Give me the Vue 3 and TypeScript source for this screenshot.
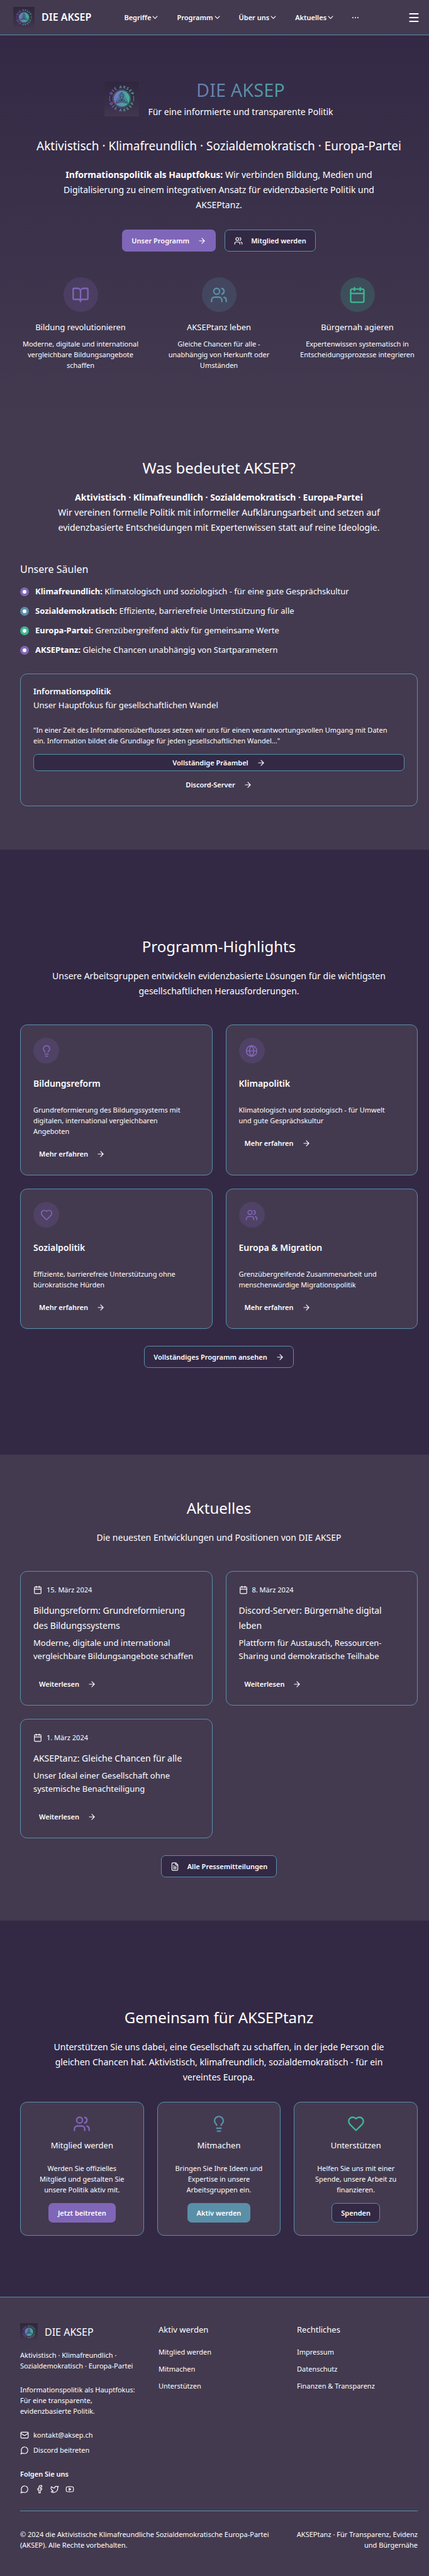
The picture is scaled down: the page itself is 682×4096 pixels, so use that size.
<script setup lang="ts">
import { h } from 'vue'

interface Feature {
  icon: string
  tone: string
  title: string
  text: string
}

interface Pillar {
  tone: string
  name: string
  text: string
}

interface Topic {
  icon: string
  title: string
  text: string
}

interface NewsItem {
  date: string
  title: string
  text: string
}

interface Action {
  icon: string
  tone: string
  title: string
  text: string
  label: string
  variant: string
}

const nav: string[] = ['Begriffe', 'Programm', 'Über uns', 'Aktuelles']

const features: Feature[] = [
  { icon: 'book', tone: 'purple', title: 'Bildung revolutionieren', text: 'Moderne, digitale und international vergleichbare Bildungsangebote schaffen' },
  { icon: 'users', tone: 'teal', title: 'AKSEPtanz leben', text: 'Gleiche Chancen für alle - unabhängig von Herkunft oder Umständen' },
  { icon: 'calendar', tone: 'green', title: 'Bürgernah agieren', text: 'Expertenwissen systematisch in Entscheidungsprozesse integrieren' },
]

const pillars: Pillar[] = [
  { tone: 'purple', name: 'Klimafreundlich:', text: 'Klimatologisch und soziologisch - für eine gute Gesprächskultur' },
  { tone: 'teal', name: 'Sozialdemokratisch:', text: 'Effiziente, barrierefreie Unterstützung für alle' },
  { tone: 'green', name: 'Europa-Partei:', text: 'Grenzübergreifend aktiv für gemeinsame Werte' },
  { tone: 'purple', name: 'AKSEPtanz:', text: 'Gleiche Chancen unabhängig von Startparametern' },
]

const topics: Topic[] = [
  { icon: 'bulb', title: 'Bildungsreform', text: 'Grundreformierung des Bildungssystems mit digitalen, international vergleichbaren Angeboten' },
  { icon: 'globe', title: 'Klimapolitik', text: 'Klimatologisch und soziologisch - für Umwelt und gute Gesprächskultur' },
  { icon: 'heart', title: 'Sozialpolitik', text: 'Effiziente, barrierefreie Unterstützung ohne bürokratische Hürden' },
  { icon: 'users', title: 'Europa & Migration', text: 'Grenzübergreifende Zusammenarbeit und menschenwürdige Migrationspolitik' },
]

const news: NewsItem[] = [
  { date: '15. März 2024', title: 'Bildungsreform: Grundreformierung des Bildungssystems', text: 'Moderne, digitale und international vergleichbare Bildungsangebote schaffen' },
  { date: '8. März 2024', title: 'Discord-Server: Bürgernähe digital leben', text: 'Plattform für Austausch, Ressourcen-Sharing und demokratische Teilhabe' },
  { date: '1. März 2024', title: 'AKSEPtanz: Gleiche Chancen für alle', text: 'Unser Ideal einer Gesellschaft ohne systemische Benachteiligung' },
]

const actions: Action[] = [
  { icon: 'users', tone: 'purple', title: 'Mitglied werden', text: 'Werden Sie offizielles Mitglied und gestalten Sie unsere Politik aktiv mit.', label: 'Jetzt beitreten', variant: 'btn-purple' },
  { icon: 'bulb', tone: 'teal', title: 'Mitmachen', text: 'Bringen Sie Ihre Ideen und Expertise in unsere Arbeitsgruppen ein.', label: 'Aktiv werden', variant: 'btn-teal' },
  { icon: 'heart', tone: 'green', title: 'Unterstützen', text: 'Helfen Sie uns mit einer Spende, unsere Arbeit zu finanzieren.', label: 'Spenden', variant: 'btn-outline' },
]

const footerColumns: { title: string; links: string[] }[] = [
  { title: 'Aktiv werden', links: ['Mitglied werden', 'Mitmachen', 'Unterstützen'] },
  { title: 'Rechtliches', links: ['Impressum', 'Datenschutz', 'Finanzen & Transparenz'] },
]

const socials: { icon: string; name: string }[] = [
  { icon: 'chat', name: 'Discord' },
  { icon: 'facebook', name: 'Facebook' },
  { icon: 'twitter', name: 'Twitter' },
  { icon: 'youtube', name: 'YouTube' },
]

// Letters run round the emblem: angle from the vertical and half the glyph width.
const angles = [-64, -48, -32, -19, -6, 13, 30, 47, 64]
const halfWidths = [3.3, 1.6, 2.4, 1, 3.1, 3, 2.5, 2.4, 2.8]

function ring(bottom: boolean) {
  const x: string[] = []
  const y: string[] = []
  const rotate: number[] = []
  angles.forEach((deg, i) => {
    const a = (deg * Math.PI) / 180
    const turn = bottom ? -a : a
    const r = bottom ? 30 : 24
    const cx = 40 + r * Math.sin(a)
    const cy = 39 + (bottom ? 1 : -1) * r * Math.cos(a)
    x.push((cx - halfWidths[i] * Math.cos(turn)).toFixed(2))
    y.push((cy - halfWidths[i] * Math.sin(turn)).toFixed(2))
    rotate.push(bottom ? -deg : deg)
  })
  return h('text', {
    x: x.join(' '),
    y: y.join(' '),
    rotate: rotate.join(' '),
    fill: 'url(#logo-tone)',
    'font-size': 9,
    'font-weight': 700,
  }, 'DIE AKSEP')
}

const Logo = () => h('svg', { class: 'logo', viewBox: '0 0 80 80', 'aria-hidden': 'true' }, [
  h('use', { href: '#emblem' }),
  ring(false),
  ring(true),
])
</script>

<template>
  <div class="page">
    <svg class="sprite" width="0" height="0" aria-hidden="true">
      <defs>
        <linearGradient id="logo-tone" gradientUnits="userSpaceOnUse" x1="12" y1="40" x2="68" y2="40">
          <stop offset="0" stop-color="#8066b8" />
          <stop offset="0.5" stop-color="#5a8fa8" />
          <stop offset="1" stop-color="#3eb793" />
        </linearGradient>
        <linearGradient id="logo-disc" gradientUnits="userSpaceOnUse" x1="21" y1="36" x2="59" y2="42">
          <stop offset="0" stop-color="#7474c0" />
          <stop offset="0.5" stop-color="#5595ad" />
          <stop offset="1" stop-color="#3eb793" />
        </linearGradient>
        <linearGradient id="logo-ground" x1="0" y1="0" x2="0" y2="1">
          <stop offset="0" stop-color="#30273f" />
          <stop offset="0.7" stop-color="#3a3049" />
          <stop offset="1" stop-color="#43384f" />
        </linearGradient>
      </defs>
      <symbol id="emblem" viewBox="0 0 80 80">
        <rect width="80" height="80" fill="url(#logo-ground)" />
        <circle cx="40" cy="39" r="20.6" fill="none" stroke="url(#logo-tone)" stroke-width="1" />
        <circle cx="40" cy="39" r="18.6" fill="url(#logo-disc)" />
        <g fill="none" stroke="#2f3557" stroke-width="1">
          <path d="M40 24A15.5 15.5 0 0 1 26.5 49.500A15.500 15.500 0 0 1 53.500 49.500A15.500 15.500 0 0 1 40 24Z" />
          <path d="M40 27.500A13 13 0 0 1 29.500 47.800A13 13 0 0 1 50.500 47.800A13 13 0 0 1 40 27.500Z" />
          <path d="M40 24Q45.500 28 47 35M40 24Q34.500 28 33 35M26.500 49.500Q26.500 43 32 37M53.500 49.500Q53.500 43 48 37" />
          <circle cx="40" cy="41" r="6.500" />
        </g>
        <path d="M12.900 32.500a28 28 0 0 0 0 13M67.100 32.500a28 28 0 0 1 0 13" fill="none" stroke="url(#logo-tone)" stroke-width="1.200" />
      </symbol>
      <symbol id="arrow" viewBox="0 0 24 24"><path d="M5 12h14M12 5l7 7-7 7" /></symbol>
      <symbol id="chevron" viewBox="0 0 12 12"><path d="M1 3.500l5 5 5-5" /></symbol>
      <symbol id="menu" viewBox="0 0 24 24"><path d="M1 3h22M1 12h22M1 21h22" /></symbol>
      <symbol id="book" viewBox="0 0 24 24"><path d="M12 7v14M3 18a1 1 0 0 1-1-1V4a1 1 0 0 1 1-1h5a4 4 0 0 1 4 4 4 4 0 0 1 4-4h5a1 1 0 0 1 1 1v13a1 1 0 0 1-1 1h-6a3 3 0 0 0-3 3 3 3 0 0 0-3-3z" /></symbol>
      <symbol id="users" viewBox="0 0 24 24"><path d="M16 21v-2a4 4 0 0 0-4-4H6a4 4 0 0 0-4 4v2" /><circle cx="9" cy="7" r="4" /><path d="M22 21v-2a4 4 0 0 0-3-3.870M16 3.130a4 4 0 0 1 0 7.750" /></symbol>
      <symbol id="calendar" viewBox="0 0 24 24"><path d="M8 2v4M16 2v4M3 10h18" /><rect x="3" y="4" width="18" height="18" rx="2" /></symbol>
      <symbol id="bulb" viewBox="0 0 24 24"><path d="M15 14c.2-1 .7-1.700 1.500-2.500 1-.9 1.500-2.200 1.500-3.500A6 6 0 0 0 6 8c0 1 .2 2.200 1.500 3.500.7.7 1.300 1.500 1.500 2.500M9 18h6M10 22h4" /></symbol>
      <symbol id="globe" viewBox="0 0 24 24"><circle cx="12" cy="12" r="10" /><path d="M12 2a14.500 14.500 0 0 0 0 20 14.500 14.500 0 0 0 0-20M2 12h20" /></symbol>
      <symbol id="heart" viewBox="0 0 24 24"><path d="M19 14c1.490-1.460 3-3.210 3-5.500A5.500 5.500 0 0 0 16.500 3c-1.760 0-3 .5-4.500 2-1.500-1.500-2.740-2-4.500-2A5.500 5.500 0 0 0 2 8.500c0 2.300 1.500 4.050 3 5.500l7 7Z" /></symbol>
      <symbol id="file" viewBox="0 0 24 24"><path d="M15 2H6a2 2 0 0 0-2 2v16a2 2 0 0 0 2 2h12a2 2 0 0 0 2-2V7ZM14 2v4a2 2 0 0 0 2 2h4M10 9H8M16 13H8M16 17H8" /></symbol>
      <symbol id="mail" viewBox="0 0 24 24"><rect x="2" y="4" width="20" height="16" rx="2" /><path d="M22 7l-8.970 5.700a1.940 1.940 0 0 1-2.060 0L2 7" /></symbol>
      <symbol id="chat" viewBox="0 0 24 24"><path d="M7.900 20A9 9 0 1 0 4 16.100L2 22Z" /></symbol>
      <symbol id="facebook" viewBox="0 0 24 24"><path d="M18 2h-3a5 5 0 0 0-5 5v3H7v4h3v8h4v-8h3l1-4h-4V7a1 1 0 0 1 1-1h3z" /></symbol>
      <symbol id="twitter" viewBox="0 0 24 24"><path d="M22 4s-.7 2.100-2 3.400c1.600 10-9.400 17.300-18 11.600 2.200.1 4.400-.6 6-2C3 15.500.5 9.600 3 5c2.200 2.600 5.600 4.100 9 4-.9-4.200 4-6.600 7-3.800 1.100 0 3-1.200 3-1.200z" /></symbol>
      <symbol id="youtube" viewBox="0 0 24 24"><path d="M2.500 17a24.120 24.120 0 0 1 0-10 2 2 0 0 1 1.400-1.400 49.560 49.560 0 0 1 16.200 0A2 2 0 0 1 21.500 7a24.120 24.120 0 0 1 0 10 2 2 0 0 1-1.400 1.400 49.550 49.550 0 0 1-16.200 0A2 2 0 0 1 2.500 17M10 15l5-3-5-3z" /></symbol>
    </svg>

    <header class="topbar">
      <a class="brand" href="#">
        <Logo class="logo-md" />
        <span>DIE AKSEP</span>
      </a>
      <nav class="nav" aria-label="Hauptnavigation">
        <button v-for="item in nav" :key="item" type="button" class="nav-item">
          {{ item }}<svg class="chevron" aria-hidden="true"><use href="#chevron" /></svg>
        </button>
        <button type="button" class="more" aria-label="Mehr"><i></i><i></i><i></i></button>
      </nav>
      <button type="button" class="burger" aria-label="Menü">
        <svg aria-hidden="true"><use href="#menu" /></svg>
      </button>
    </header>

    <main>
      <section class="hero wrap">
        <div class="hero-brand">
          <Logo class="logo-lg" />
          <div>
            <h1>DIE AKSEP</h1>
            <p class="claim">Für eine informierte und transparente Politik</p>
          </div>
        </div>
        <p class="tagline">Aktivistisch · Klimafreundlich · Sozialdemokratisch · Europa-Partei</p>
        <p class="lead hero-lead">
          <strong>Informationspolitik als Hauptfokus:</strong> Wir verbinden Bildung, Medien und Digitalisierung zu einem integrativen Ansatz für evidenzbasierte Politik und AKSEPtanz.
        </p>
        <div class="hero-buttons">
          <a class="btn btn-purple" href="#">Unser Programm<svg class="icon" aria-hidden="true"><use href="#arrow" /></svg></a>
          <a class="btn btn-outline" href="#"><svg class="icon" aria-hidden="true"><use href="#users" /></svg>Mitglied werden</a>
        </div>
        <div class="features">
          <div v-for="f in features" :key="f.title" class="feature">
            <span class="disc disc-lg" :class="f.tone"><svg class="icon icon-xl" aria-hidden="true"><use :href="'#' + f.icon" /></svg></span>
            <h2>{{ f.title }}</h2>
            <p>{{ f.text }}</p>
          </div>
        </div>
      </section>

      <section class="about wrap">
        <h2 class="heading">Was bedeutet AKSEP?</h2>
        <p class="lead">
          <strong>Aktivistisch · Klimafreundlich · Sozialdemokratisch · Europa-Partei</strong><br />
          Wir vereinen formelle Politik mit informeller Aufklärungsarbeit und setzen auf evidenzbasierte Entscheidungen mit Expertenwissen statt auf reine Ideologie.
        </p>
        <h3 class="pillars-title">Unsere Säulen</h3>
        <ul class="pillars">
          <li v-for="p in pillars" :key="p.name">
            <span class="bullet" :class="p.tone"></span>
            <span><strong>{{ p.name }}</strong> {{ p.text }}</span>
          </li>
        </ul>
        <article class="card focus">
          <h3>Informationspolitik</h3>
          <p class="focus-sub">Unser Hauptfokus für gesellschaftlichen Wandel</p>
          <p class="quote">"In einer Zeit des Informationsüberflusses setzen wir uns für einen verantwortungsvollen Umgang mit Daten ein. Information bildet die Grundlage für jeden gesellschaftlichen Wandel..."</p>
          <a class="btn btn-sm btn-outline" href="#">Vollständige Präambel<svg class="icon" aria-hidden="true"><use href="#arrow" /></svg></a>
          <a class="btn btn-sm" href="#">Discord-Server<svg class="icon" aria-hidden="true"><use href="#arrow" /></svg></a>
        </article>
      </section>

      <section class="program wrap">
        <h2 class="heading">Programm-Highlights</h2>
        <p class="lead">Unsere Arbeitsgruppen entwickeln evidenzbasierte Lösungen für die wichtigsten gesellschaftlichen Herausforderungen.</p>
        <div class="grid two">
          <article v-for="t in topics" :key="t.title" class="card topic">
            <span class="disc purple"><svg class="icon icon-md" aria-hidden="true"><use :href="'#' + t.icon" /></svg></span>
            <h3>{{ t.title }}</h3>
            <p>{{ t.text }}</p>
            <a class="btn btn-link" href="#">Mehr erfahren<svg class="icon" aria-hidden="true"><use href="#arrow" /></svg></a>
          </article>
        </div>
        <div class="section-action">
          <a class="btn btn-outline" href="#">Vollständiges Programm ansehen<svg class="icon" aria-hidden="true"><use href="#arrow" /></svg></a>
        </div>
      </section>

      <section class="news wrap">
        <h2 class="heading">Aktuelles</h2>
        <p class="lead">Die neuesten Entwicklungen und Positionen von DIE AKSEP</p>
        <div class="grid two">
          <article v-for="n in news" :key="n.title" class="card news-item">
            <p class="date"><svg class="icon" aria-hidden="true"><use href="#calendar" /></svg>{{ n.date }}</p>
            <h3>{{ n.title }}</h3>
            <p class="news-text">{{ n.text }}</p>
            <a class="btn btn-link" href="#">Weiterlesen<svg class="icon" aria-hidden="true"><use href="#arrow" /></svg></a>
          </article>
        </div>
        <div class="section-action">
          <a class="btn btn-outline" href="#"><svg class="icon" aria-hidden="true"><use href="#file" /></svg>Alle Pressemitteilungen</a>
        </div>
      </section>

      <section class="join wrap">
        <h2 class="heading">Gemeinsam für AKSEPtanz</h2>
        <p class="lead">Unterstützen Sie uns dabei, eine Gesellschaft zu schaffen, in der jede Person die gleichen Chancen hat. Aktivistisch, klimafreundlich, sozialdemokratisch - für ein vereintes Europa.</p>
        <div class="grid three">
          <article v-for="a in actions" :key="a.title" class="card action">
            <svg class="icon icon-xl" :class="a.tone" aria-hidden="true"><use :href="'#' + a.icon" /></svg>
            <h3>{{ a.title }}</h3>
            <p>{{ a.text }}</p>
            <a class="btn btn-md" :class="a.variant" href="#">{{ a.label }}</a>
          </article>
        </div>
      </section>
    </main>

    <footer class="footer wrap">
      <div class="footer-top">
        <div>
          <a class="footer-brand" href="#">
            <Logo class="logo-sm" />
            <span>DIE AKSEP</span>
          </a>
          <p class="footer-tag">Aktivistisch · Klimafreundlich · Sozialdemokratisch · Europa-Partei</p>
          <p class="footer-info">Informationspolitik als Hauptfokus: Für eine transparente, evidenzbasierte Politik.</p>
          <ul class="contact">
            <li><a href="#"><svg class="icon" aria-hidden="true"><use href="#mail" /></svg>kontakt@aksep.ch</a></li>
            <li><a href="#"><svg class="icon" aria-hidden="true"><use href="#chat" /></svg>Discord beitreten</a></li>
          </ul>
          <h4>Folgen Sie uns</h4>
          <ul class="socials">
            <li v-for="s in socials" :key="s.name">
              <a href="#" :aria-label="s.name"><svg class="icon" aria-hidden="true"><use :href="'#' + s.icon" /></svg></a>
            </li>
          </ul>
        </div>
        <div v-for="c in footerColumns" :key="c.title">
          <h3>{{ c.title }}</h3>
          <ul class="links">
            <li v-for="l in c.links" :key="l"><a href="#">{{ l }}</a></li>
          </ul>
        </div>
      </div>
      <div class="footer-bottom">
        <p>© 2024 die Aktivistische Klimafreundliche Sozialdemokratische Europa-Partei (AKSEP). Alle Rechte vorbehalten.</p>
        <p class="motto">AKSEPtanz · Für Transparenz, Evidenz und Bürgernähe</p>
      </div>
    </footer>
  </div>
</template>

<style>
body {
  margin: 0;
  background: #433a50;
}
</style>

<style scoped>
.page {
  --dark: #332945;
  --light: #433a50;
  --purple: #8066b8;
  --teal: #5a8fa8;
  --green: #3eb793;
  color: #fff;
  background: var(--light);
  font-family: "Noto Sans", "Open Sans", "Liberation Sans", sans-serif;
  font-size: 13px;
  line-height: 21px;
}

.page *,
.page *::before {
  box-sizing: border-box;
}

h1, h2, h3, h4, p, ul {
  margin: 0;
  padding: 0;
  font-size: inherit;
  font-weight: 400;
}

ul {
  list-style: none;
}

a {
  color: inherit;
  text-decoration: none;
}

button {
  margin: 0;
  padding: 0;
  border: 0;
  background: none;
  color: inherit;
  font: inherit;
}

strong {
  font-weight: 700;
}

svg {
  display: block;
  flex: none;
}

.sprite {
  position: absolute;
}

.wrap {
  padding-left: 32px;
  padding-right: 18px;
}

.icon {
  width: 14px;
  height: 14px;
  fill: none;
  stroke: currentColor;
  stroke-width: 2;
  stroke-linecap: round;
  stroke-linejoin: round;
}

.icon-md {
  width: 20px;
  height: 20px;
}

.icon-xl {
  width: 28px;
  height: 28px;
}

.purple { color: var(--purple); }
.teal { color: var(--teal); }
.green { color: var(--green); }

/* Kopfzeile */
.topbar {
  display: flex;
  align-items: center;
  height: 56px;
  padding: 0 16px 0 21px;
  border-bottom: 1px solid var(--teal);
}

.brand {
  display: flex;
  align-items: center;
  gap: 11px;
  font-size: 16px;
  font-weight: 600;
}

.logo-md {
  width: 34px;
  height: 34px;
}

.nav {
  display: flex;
  align-items: center;
  gap: 30px;
  margin-left: 52px;
}

.nav-item {
  display: flex;
  align-items: center;
  gap: 2px;
  font-size: 11px;
  font-weight: 600;
  white-space: nowrap;
}

.chevron {
  width: 9px;
  height: 9px;
  fill: none;
  stroke: currentColor;
  stroke-width: 1.5;
}

.more {
  display: flex;
  gap: 2px;
}

.more i {
  width: 2px;
  height: 2px;
  border-radius: 50%;
  background: #fff;
}

.burger {
  margin-left: auto;
}

.burger svg {
  width: 16px;
  height: 16px;
  stroke: currentColor;
  stroke-width: 3;
}

/* Einstieg */
.hero {
  padding-top: 69px;
  padding-bottom: 69px;
  background: linear-gradient(var(--dark), var(--light));
  text-align: center;
}

.hero-brand {
  display: flex;
  justify-content: center;
  align-items: center;
  gap: 14px;
}

.logo-lg {
  width: 55px;
  height: 55px;
}

h1 {
  font-size: 29px;
  line-height: 35px;
  background: linear-gradient(90deg, var(--purple), var(--teal) 50%, var(--green));
  background-clip: text;
  -webkit-background-clip: text;
  color: transparent;
}

.claim {
  margin-top: 6px;
  font-size: 14px;
  line-height: 24px;
}

.tagline {
  margin-top: 28px;
  font-size: 19px;
  line-height: 28px;
}

.lead {
  max-width: 568px;
  margin: 20px auto 0;
  font-size: 14px;
  line-height: 24px;
  text-align: center;
}

.hero-lead {
  max-width: 540px;
}

.hero-buttons {
  display: flex;
  justify-content: center;
  gap: 14px;
  margin-top: 27px;
}

.btn {
  display: flex;
  align-items: center;
  justify-content: center;
  gap: 13px;
  width: fit-content;
  height: 35px;
  padding: 0 14px;
  border: 1px solid transparent;
  border-radius: 7px;
  font-size: 11px;
  line-height: 17px;
  font-weight: 600;
  white-space: nowrap;
}

.btn-purple { background: var(--purple); color: #fff; }
.btn-teal { background: var(--teal); }

.btn-outline {
  background: var(--dark);
  border-color: var(--teal);
}

.btn-sm {
  width: 100%;
  height: 27px;
}

.btn-md {
  height: 31px;
}

.btn-link {
  height: 27px;
  padding: 0 8px;
}

.features {
  display: grid;
  grid-template-columns: repeat(3, 1fr);
  gap: 28px;
  margin-top: 41px;
}

.feature {
  display: flex;
  flex-direction: column;
  align-items: center;
}

.disc {
  display: flex;
  align-items: center;
  justify-content: center;
  width: 41px;
  height: 41px;
  border-radius: 50%;
}

.disc-lg {
  width: 55px;
  height: 55px;
}

.disc.purple { background: rgba(128, 102, 184, 0.2); }
.disc.teal { background: rgba(90, 143, 168, 0.2); }
.disc.green { background: rgba(62, 183, 147, 0.2); }

.feature h2 {
  margin-top: 14px;
  font-size: 13px;
}

.feature p {
  margin-top: 7px;
  font-size: 11px;
  line-height: 17px;
}

/* Was bedeutet AKSEP */
.about {
  padding-top: 70px;
  padding-bottom: 69px;
}

.heading {
  font-size: 24px;
  line-height: 31px;
  text-align: center;
}

.pillars-title {
  margin-top: 42px;
  font-size: 16px;
  line-height: 24px;
}

.pillars {
  display: grid;
  gap: 10px;
  margin-top: 13px;
}

.pillars li {
  display: flex;
  align-items: center;
  gap: 10px;
}

.bullet {
  width: 14px;
  height: 14px;
  border: 4px solid currentColor;
  border-radius: 50%;
  background: #fff;
}

.card {
  padding: 20px;
  border: 1px solid var(--teal);
  border-radius: 11px;
  background: var(--light);
}

.focus {
  margin-top: 27px;
}

.focus h3 {
  line-height: 14px;
  font-weight: 600;
}

.focus-sub {
  margin-top: 5px;
}

.quote {
  max-width: 574px;
  margin: 20px 0 13px;
  font-size: 11px;
  line-height: 17px;
}

.btn-sm + .btn-sm {
  margin-top: 8px;
}

/* Programm */
.program {
  padding-top: 138px;
  padding-bottom: 138px;
  background: var(--dark);
}

.grid {
  display: grid;
  gap: 21px;
  margin-top: 41px;
}

.two {
  grid-template-columns: repeat(2, 1fr);
}

.three {
  grid-template-columns: repeat(3, 1fr);
  margin-top: 27px;
}

.topic h3 {
  margin-top: 21px;
  font-size: 14px;
  font-weight: 600;
}

.topic p {
  max-width: 248px;
  margin: 23px 0 14px;
  font-size: 11px;
  line-height: 17px;
}

.section-action {
  display: flex;
  justify-content: center;
  margin-top: 27px;
}

/* Aktuelles */
.news {
  padding-top: 69px;
  padding-bottom: 69px;
}

.date {
  display: flex;
  align-items: center;
  gap: 7px;
  font-size: 11px;
  line-height: 17px;
}

.news-item h3 {
  margin-top: 13px;
  font-size: 14px;
  line-height: 24px;
}

.news-text {
  margin: 5px 0 20px;
}

/* Mitwirken */
.join {
  padding-top: 138px;
  padding-bottom: 97px;
  background: var(--dark);
}

.action {
  display: flex;
  flex-direction: column;
  align-items: center;
  text-align: center;
}

.action h3 {
  margin-top: 10px;
}

.action p {
  max-width: 148px;
  margin: 17px 0 13px;
  font-size: 11px;
  line-height: 17px;
}

/* Fußzeile */
.footer {
  padding-top: 41px;
  padding-bottom: 41px;
  border-top: 1px solid var(--teal);
  font-size: 11px;
  line-height: 17px;
}

.footer-top {
  display: grid;
  grid-template-columns: repeat(3, 1fr);
  gap: 28px;
}

.footer-brand {
  display: flex;
  align-items: center;
  gap: 11px;
  font-size: 16px;
  line-height: 28px;
}

.logo-sm {
  width: 28px;
  height: 28px;
}

.footer-tag {
  margin-top: 14px;
}

.footer-info {
  margin-top: 21px;
}

.contact {
  display: grid;
  gap: 7px;
  margin-top: 21px;
}

.contact a {
  display: flex;
  align-items: center;
  gap: 7px;
}

.footer h4 {
  margin-top: 21px;
  font-weight: 600;
}

.socials {
  display: flex;
  gap: 10px;
  margin-top: 9px;
}

.footer h3 {
  font-size: 13px;
  line-height: 21px;
}

.links {
  display: grid;
  gap: 6px;
  margin-top: 14px;
  line-height: 21px;
}

.footer-bottom {
  display: flex;
  justify-content: space-between;
  gap: 28px;
  margin-top: 27px;
  padding-top: 28px;
  border-top: 1px solid var(--teal);
}

.motto {
  flex: none;
  width: 200px;
  text-align: right;
}
</style>
